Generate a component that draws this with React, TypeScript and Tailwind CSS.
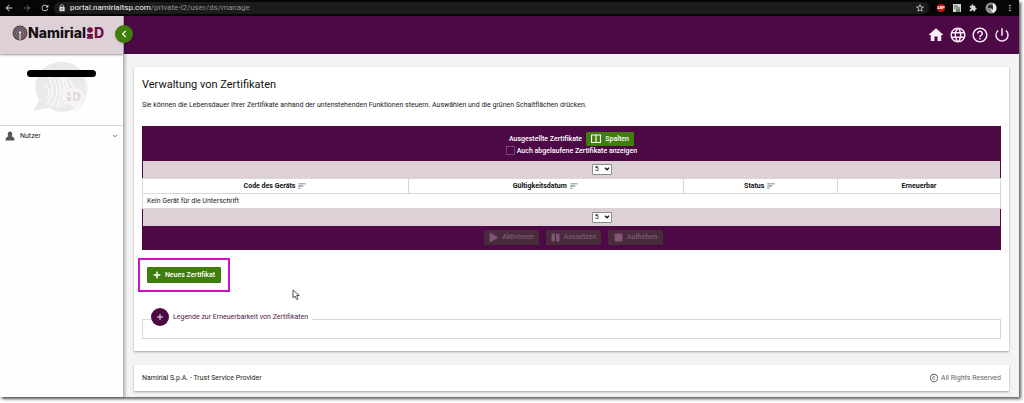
import React from 'react';
import {
  MdAdd,
  MdArrowBack,
  MdArrowForward,
  MdCopyright,
  MdExpandMore,
  MdExtension,
  MdHelpOutline,
  MdHome,
  MdLanguage,
  MdLock,
  MdMoreVert,
  MdPowerSettingsNew,
  MdRefresh,
  MdSort,
  MdStarBorder,
} from 'react-icons/md';
import { FaChevronLeft, FaPause, FaPlay, FaPlus, FaStop } from 'react-icons/fa';

const columns = [
  { label: 'Code des Geräts', width: 'w-[31%]', sortable: true },
  { label: 'Gültigkeitsdatum', width: 'w-[32%]', sortable: true },
  { label: 'Status', width: 'w-[18%]', sortable: true },
  { label: 'Erneuerbar', width: 'w-[19%]', sortable: false },
];

const headerLinks = [
  { label: 'Startseite', icon: MdHome },
  { label: 'Sprache', icon: MdLanguage },
  { label: 'Hilfe', icon: MdHelpOutline },
  { label: 'Abmelden', icon: MdPowerSettingsNew },
];

const tableActions = [
  { label: 'Aktivieren', icon: FaPlay },
  { label: 'Aussetzen', icon: FaPause },
  { label: 'Aufheben', icon: FaStop },
];

const BrowserBar: React.FC = () => (
  <div className="flex h-4 items-center bg-[#060606] text-[#d8d8d8]">
    <nav className="flex items-center gap-2 pl-1">
      <button aria-label="Zurück"><MdArrowBack className="h-[10px] w-[10px]" /></button>
      <button aria-label="Vorwärts" className="text-[#666666]"><MdArrowForward className="h-[10px] w-[10px]" /></button>
      <button aria-label="Neu laden"><MdRefresh className="h-[10px] w-[10px]" /></button>
    </nav>
    <div className="ml-1 flex h-3 min-w-0 flex-1 items-center rounded-full bg-[#1c1c1c] pl-1">
      <MdLock className="h-2 w-2 shrink-0" />
      <input
        aria-label="Adresse"
        readOnly
        value="portal.namirialtsp.com/private-l2/user/ds/manage"
        className="sr-only"
      />
      <span aria-hidden="true" className="ml-1 text-[8px] leading-3 text-[#8d8d8d]">
        <span className="text-[#f4f4f4]">portal.namirialtsp.com</span>/private-l2/user/ds/manage
      </span>
      <MdStarBorder className="mr-1 ml-auto h-[10px] w-[10px]" />
    </div>
    <div className="flex items-center gap-2 pr-1 pl-2">
      <span className="flex h-2 w-2 items-center justify-center rounded-sm bg-[#c9140f] text-[4px] leading-none font-bold text-white">ABP</span>
      <svg viewBox="0 0 8 8" className="h-2 w-2">
        <rect width="8" height="8" fill="#d5d8d2" />
        <path d="M1 2h4M1 4h6" stroke="#555" />
        <rect x="3" y="5" width="4" height="3" fill="#678366" />
      </svg>
      <MdExtension className="h-2 w-2" />
      <svg viewBox="0 0 12 12" className="h-3 w-3">
        <circle cx="6" cy="6" r="5.5" fill="#8b9196" />
        <path d="M8 .9a5.5 5.5 0 0 1 0 10.2L6 8l2-3z" fill="#eee" />
        <path d="M3 4q3-3 5 0v4L6 6 3 6z" fill="#292e33" />
      </svg>
      <MdMoreVert className="h-[10px] w-[10px]" />
    </div>
  </div>
);

const Logo: React.FC = () => (
  <a href="#" className="flex items-center font-['Inter','Liberation_Sans',sans-serif] text-[14px] leading-4 font-extrabold text-[#171114]">
    <svg viewBox="0 0 28 28" className="h-4 w-4 shrink-0" fill="none">
      <circle cx="14" cy="14" r="13" fill="#5c4a54" />
      <circle cx="14" cy="14" r="9.5" stroke="#8d7f88" strokeWidth="1.2" />
      <circle cx="14" cy="14" r="6" stroke="#a598a0" strokeWidth="1.2" />
      <circle cx="14" cy="13" r="2.2" fill="#e7dbe1" />
      <path d="M14 14v12" stroke="#e7dbe1" strokeWidth="2" />
    </svg>
    Namirial
    <svg viewBox="0 0 8 12" className="h-3 w-2" fill="#6f0f46">
      <circle cx="4" cy="3" r="2.8" />
      <path d="M1 7h6v1.500L5.500 9.500h1.500v2.300H1V9.500h1.500L1 8.500z" />
    </svg>
    <span className="text-[#6f0f46]">D</span>
  </a>
);

// Pale speech bubble with a fingerprint behind the user name
const Avatar: React.FC = () => (
  <svg viewBox="0 0 62 60" className="h-15 w-16" fill="none">
    <path d="M28 4a25 25 0 1 1-10 46L2 53l6-11A25 25 0 0 1 28 4z" fill="#ece9eb" />
    <path d="M51 15a28 28 0 0 1-8 39" stroke="#f4f2f4" strokeWidth="2" />
    <g stroke="#fbfafb" strokeWidth="1.5">
      <path d="M16 46q9-10 3-24M20 48q10-12 3-27M25 49q8-12 2-29M29 49q7-14 2-29" />
      <path d="M17 20q18-10 22 17M21 18q18-5 22 15M33 48q5-9 1-20M15 28q5 5 2 12" />
    </g>
    <circle cx="43" cy="39" r="10" fill="#f6f4f6" />
    <g fill="#dedade">
      <circle cx="38" cy="36" r="2" />
      <path d="M36 39h4v4h-4zM42 34h3a5 4.500 0 0 1 0 9h-3zm2 2v5h1a2 2.500 0 0 0 0-5z" />
    </g>
  </svg>
);

const Sidebar: React.FC = () => (
  <aside className="relative z-10 flex w-[124px] shrink-0 flex-col border-r border-[#b5b5b5] bg-[#fefefe] shadow-[1px_0_3px_rgba(0,0,0,0.3)]">
    <div className="flex h-[38px] items-center bg-[#ddd0d6] pb-1 pl-3 shadow-[0_1px_2px_rgba(0,0,0,0.4)]">
      <Logo />
    </div>
    <button
      aria-label="Menü einklappen"
      className="absolute top-[9px] -right-[10px] flex h-[18px] w-[18px] items-center justify-center rounded-full bg-[#3f7d0c] text-white shadow"
    >
      <FaChevronLeft className="h-2 w-2" />
    </button>
    <div className="relative flex h-[72px] justify-center border-b border-[#d2d2d2] pt-1">
      <Avatar />
      <div className="absolute top-4 left-[27px] h-[7px] w-[69px] rounded-full bg-black" />
    </div>
    <nav>
      <a href="#" className="flex h-[20px] items-center px-1">
        <svg viewBox="0 0 12 12" className="h-3 w-3" fill="#555555">
          <path d="M6 1.500a2.300 2.600 0 0 1 1.400 4.700q3 .5 3.100 4.300h-9q.1-3.800 3.100-4.300A2.300 2.600 0 0 1 6 1.500z" />
        </svg>
        <span className="ml-1 text-[#222222]">Nutzer</span>
        <MdExpandMore className="ml-auto h-2 w-2 text-[#555555]" />
      </a>
    </nav>
  </aside>
);

const Pager: React.FC<{ label: string }> = ({ label }) => (
  <div className="flex h-[17px] items-center justify-center gap-2 text-[#e8dfe4]">
    <span aria-hidden="true" className="flex gap-2">
      <span>I‹</span>
      <span>‹</span>
    </span>
    <span aria-hidden="true" className="ml-4 flex gap-2">
      <span>›</span>
      <span>›I</span>
    </span>
    <span className="relative flex items-center">
      <select aria-label={label} className="h-[11px] w-5 appearance-none rounded-[1px] border border-[#8a8a8a] bg-white pl-[2px] leading-none text-black">
        <option>5</option>
        <option>10</option>
        <option>20</option>
      </select>
      <svg viewBox="0 0 6 4" className="pointer-events-none absolute right-[2px] h-1 w-[6px]" fill="none">
        <path d="M1 .8 3 2.800 5 .8" stroke="#111" strokeWidth="1.3" />
      </svg>
    </span>
  </div>
);

const CertificateTable: React.FC = () => (
  <table className="mt-4 w-full table-fixed border-collapse border border-[#4d0846]">
    <colgroup>
      {columns.map((column) => (
        <col key={column.label} className={column.width} />
      ))}
    </colgroup>
    <thead>
      <tr className="bg-[#4d0846] text-white">
        <td colSpan={4} className="h-[34px]">
          <div className="flex items-center justify-center gap-1 font-medium">
            Ausgestellte Zertifikate
            <button className="flex h-[14px] w-[48px] items-center justify-center gap-1 rounded-[1px] bg-[#3f7d0c] font-medium">
              <svg viewBox="0 0 10 9" className="h-[9px] w-[10px]" fill="none" stroke="currentColor">
                <path d="M.5 1h9v7.500h-9zM5 1v7.500M.5 1h9" strokeWidth="1.200" />
              </svg>
              Spalten
            </button>
          </div>
          <label className="flex items-center justify-center gap-[2px] leading-[10px] font-medium">
            <input type="checkbox" className="h-[9px] w-[9px] appearance-none border border-[#74466f]" />
            Auch abgelaufene Zertifikate anzeigen
          </label>
        </td>
      </tr>
      <tr className="bg-[#ddd0d6]">
        <td colSpan={4}><Pager label="Zeilen pro Seite oben" /></td>
      </tr>
      <tr className="bg-white">
        {columns.map((column) => (
          <th key={column.label} className="h-[15px] border border-[#d8d8d8] font-bold text-[#111111]">
            <span className="flex items-center justify-center gap-[2px]">
              {column.label}
              {column.sortable && <MdSort className="h-[10px] w-[10px] text-[#666666]" />}
            </span>
          </th>
        ))}
      </tr>
    </thead>
    <tbody>
      <tr className="bg-white">
        <td colSpan={4} className="h-[15px] border border-[#d8d8d8] px-1">Kein Gerät für die Unterschrift</td>
      </tr>
    </tbody>
    <tfoot>
      <tr className="bg-[#ddd0d6]">
        <td colSpan={4}><Pager label="Zeilen pro Seite unten" /></td>
      </tr>
      <tr className="bg-[#4d0846]">
        <td colSpan={4} className="h-[24px]">
          <div className="flex justify-center gap-[7px] pl-1">
            {tableActions.map((action) => (
              <button
                key={action.label}
                disabled
                className="flex h-[15px] w-[55px] items-center justify-center gap-1 rounded-[1px] bg-[#492c3a] font-medium text-[#805578]"
              >
                <action.icon className="h-[9px] w-[9px]" />
                {action.label}
              </button>
            ))}
          </div>
        </td>
      </tr>
    </tfoot>
  </table>
);

const App: React.FC = () => {
  return (
    <div className="flex min-h-screen flex-col bg-white pr-[5px] pb-[6px] font-['Roboto',sans-serif] text-[7px] leading-[10px] text-[#222222]">
      <div className="flex flex-1 flex-col shadow-[2px_2px_3px_rgba(0,0,0,0.65)]">
        <BrowserBar />
        <div className="flex flex-1">
          <Sidebar />
          <div className="flex min-w-0 flex-1 flex-col bg-[#f3f3f3]">
            <header className="flex h-[38px] shrink-0 items-center justify-end gap-1 bg-[#4d0846] pr-2 text-[#fbeaf8]">
              {headerLinks.map((link) => (
                <a key={link.label} href="#" aria-label={link.label} className="flex w-[18px] justify-center">
                  <link.icon className="h-[18px] w-[18px]" />
                </a>
              ))}
            </header>

            <main className="mx-[10px] mt-[13px] bg-white px-2 pt-3 pb-3 shadow-[0_1px_2px_rgba(0,0,0,0.35)]">
              <h1 className="text-[11px] leading-3 text-[#111111]">Verwaltung von Zertifikaten</h1>
              <p className="mt-[9px]">
                Sie können die Lebensdauer Ihrer Zertifikate anhand der untenstehenden Funktionen steuern. Auswählen und die grünen Schaltflächen drücken.
              </p>
              <CertificateTable />

              <div className="mt-2 -ml-1 w-fit border-2 border-[#c414c4] px-[7px] py-[7px]">
                <button className="flex h-4 w-[74px] items-center justify-center gap-1 rounded-[1px] bg-[#3f7d0c] font-medium text-white">
                  <FaPlus className="h-2 w-2" />
                  Neues Zertifikat
                </button>
              </div>

              <fieldset className="mt-4 h-[31px] border border-[#d8d8d8] px-2">
                <legend className="flex items-center gap-1 pr-1 pb-1 text-[#4d2048]">
                  <button aria-label="Legende anzeigen" className="flex h-[18px] w-[18px] items-center justify-center rounded-full bg-[#4d0846] text-white">
                    <MdAdd className="h-[10px] w-[10px]" />
                  </button>
                  Legende zur Erneuerbarkeit von Zertifikaten
                </legend>
              </fieldset>
            </main>

            <footer className="mx-[10px] mt-[14px] mb-[6px] flex h-[26px] items-center justify-between bg-white px-2 shadow-[0_1px_2px_rgba(0,0,0,0.35)]">
              <span>Namirial S.p.A. - Trust Service Provider</span>
              <span className="flex items-center gap-[2px] text-[#666666]">
                <MdCopyright className="h-[10px] w-[10px]" />
                All Rights Reserved
              </span>
            </footer>
          </div>
        </div>
      </div>

      <svg viewBox="0 0 8 12" className="pointer-events-none absolute top-[289px] left-[292px] h-3 w-2" fill="#ffffff" stroke="#555555">
        <path d="M1 1v8l2-2 1.500 3.500 1.500-.7L4.600 6.500H7.300z" />
      </svg>
    </div>
  );
};

export default App;
